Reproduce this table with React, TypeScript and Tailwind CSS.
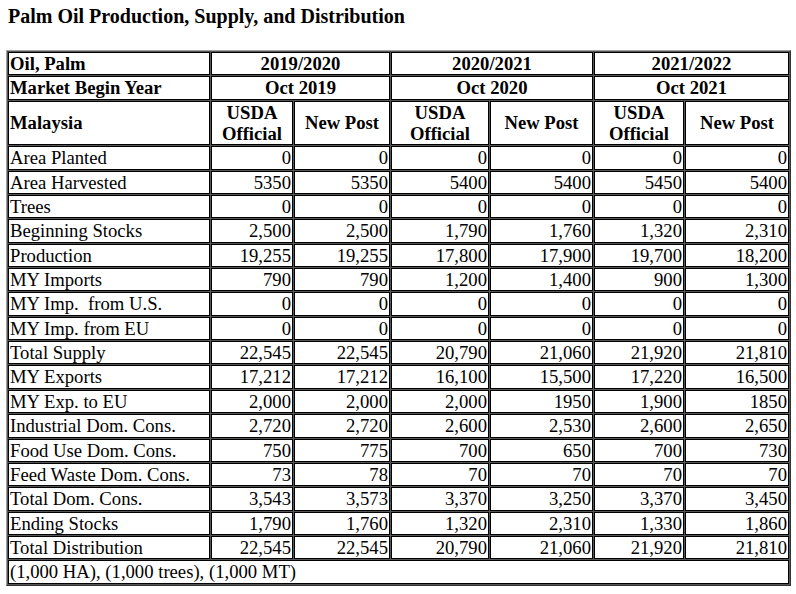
import React from "react";

const rows: [string, string[]][] = [
  ["Area Planted", ["0", "0", "0", "0", "0", "0"]],
  ["Area Harvested", ["5350", "5350", "5400", "5400", "5450", "5400"]],
  ["Trees", ["0", "0", "0", "0", "0", "0"]],
  ["Beginning Stocks", ["2,500", "2,500", "1,790", "1,760", "1,320", "2,310"]],
  ["Production", ["19,255", "19,255", "17,800", "17,900", "19,700", "18,200"]],
  ["MY Imports", ["790", "790", "1,200", "1,400", "900", "1,300"]],
  ["MY Imp.  from U.S.", ["0", "0", "0", "0", "0", "0"]],
  ["MY Imp. from EU", ["0", "0", "0", "0", "0", "0"]],
  ["Total Supply", ["22,545", "22,545", "20,790", "21,060", "21,920", "21,810"]],
  ["MY Exports", ["17,212", "17,212", "16,100", "15,500", "17,220", "16,500"]],
  ["MY Exp. to EU", ["2,000", "2,000", "2,000", "1950", "1,900", "1850"]],
  ["Industrial Dom. Cons.", ["2,720", "2,720", "2,600", "2,530", "2,600", "2,650"]],
  ["Food Use Dom. Cons.", ["750", "775", "700", "650", "700", "730"]],
  ["Feed Waste Dom. Cons.", ["73", "78", "70", "70", "70", "70"]],
  ["Total Dom. Cons.", ["3,543", "3,573", "3,370", "3,250", "3,370", "3,450"]],
  ["Ending Stocks", ["1,790", "1,760", "1,320", "2,310", "1,330", "1,860"]],
  ["Total Distribution", ["22,545", "22,545", "20,790", "21,060", "21,920", "21,810"]],
];

const cell = "border border-black bg-white px-px py-0 leading-[21.35px] align-middle";

export default function App() {
  return (
    <div
      className="bg-white text-black w-[796px] h-[594px] pl-[6px] pt-[5px]"
      style={{ fontFamily: '"Liberation Serif", "Times New Roman", serif' }}
    >
      <p className="pl-[2px] text-[20px] font-bold leading-[23px] mb-[22px]">
        Palm Oil Production, Supply, and Distribution
      </p>
      <table className="table-fixed w-[785px] border-separate border-spacing-[1px] bg-[#555] border border-t-[#a0a0a0] border-l-[#a0a0a0] border-r-[#333] border-b-[#333] text-[18.67px]">
        <colgroup>
          <col className="w-[202px]" />
          <col className="w-[82px]" />
          <col className="w-[96px]" />
          <col className="w-[98px]" />
          <col className="w-[103px]" />
          <col className="w-[90px]" />
          <col className="w-[104px]" />
        </colgroup>
        <tbody>
          <tr>
            <td className={`${cell} font-bold text-left`}>Oil, Palm</td>
            <td colSpan={2} className={`${cell} font-bold text-center`}>2019/2020</td>
            <td colSpan={2} className={`${cell} font-bold text-center`}>2020/2021</td>
            <td colSpan={2} className={`${cell} font-bold text-center`}>2021/2022</td>
          </tr>
          <tr>
            <td className={`${cell} font-bold text-left`}>Market Begin Year</td>
            <td colSpan={2} className={`${cell} font-bold text-center`}>Oct 2019</td>
            <td colSpan={2} className={`${cell} font-bold text-center`}>Oct 2020</td>
            <td colSpan={2} className={`${cell} font-bold text-center`}>Oct 2021</td>
          </tr>
          <tr>
            <td className={`${cell} font-bold text-left`}>Malaysia</td>
            {[0, 1, 2].map((i) => (
              <React.Fragment key={i}>
                <td className={`${cell} font-bold text-center`}>
                  USDA
                  <br />
                  Official
                </td>
                <td className={`${cell} font-bold text-center`}>New Post</td>
              </React.Fragment>
            ))}
          </tr>
          {rows.map(([label, vals]) => (
            <tr key={label}>
              <td className={`${cell} text-left whitespace-pre`}>{label}</td>
              {vals.map((v, i) => (
                <td key={i} className={`${cell} text-right`}>
                  {v}
                </td>
              ))}
            </tr>
          ))}
          <tr>
            <td colSpan={7} className={`${cell} text-left`}>
              (1,000 HA), (1,000 trees), (1,000 MT)
            </td>
          </tr>
        </tbody>
      </table>
    </div>
  );
}
